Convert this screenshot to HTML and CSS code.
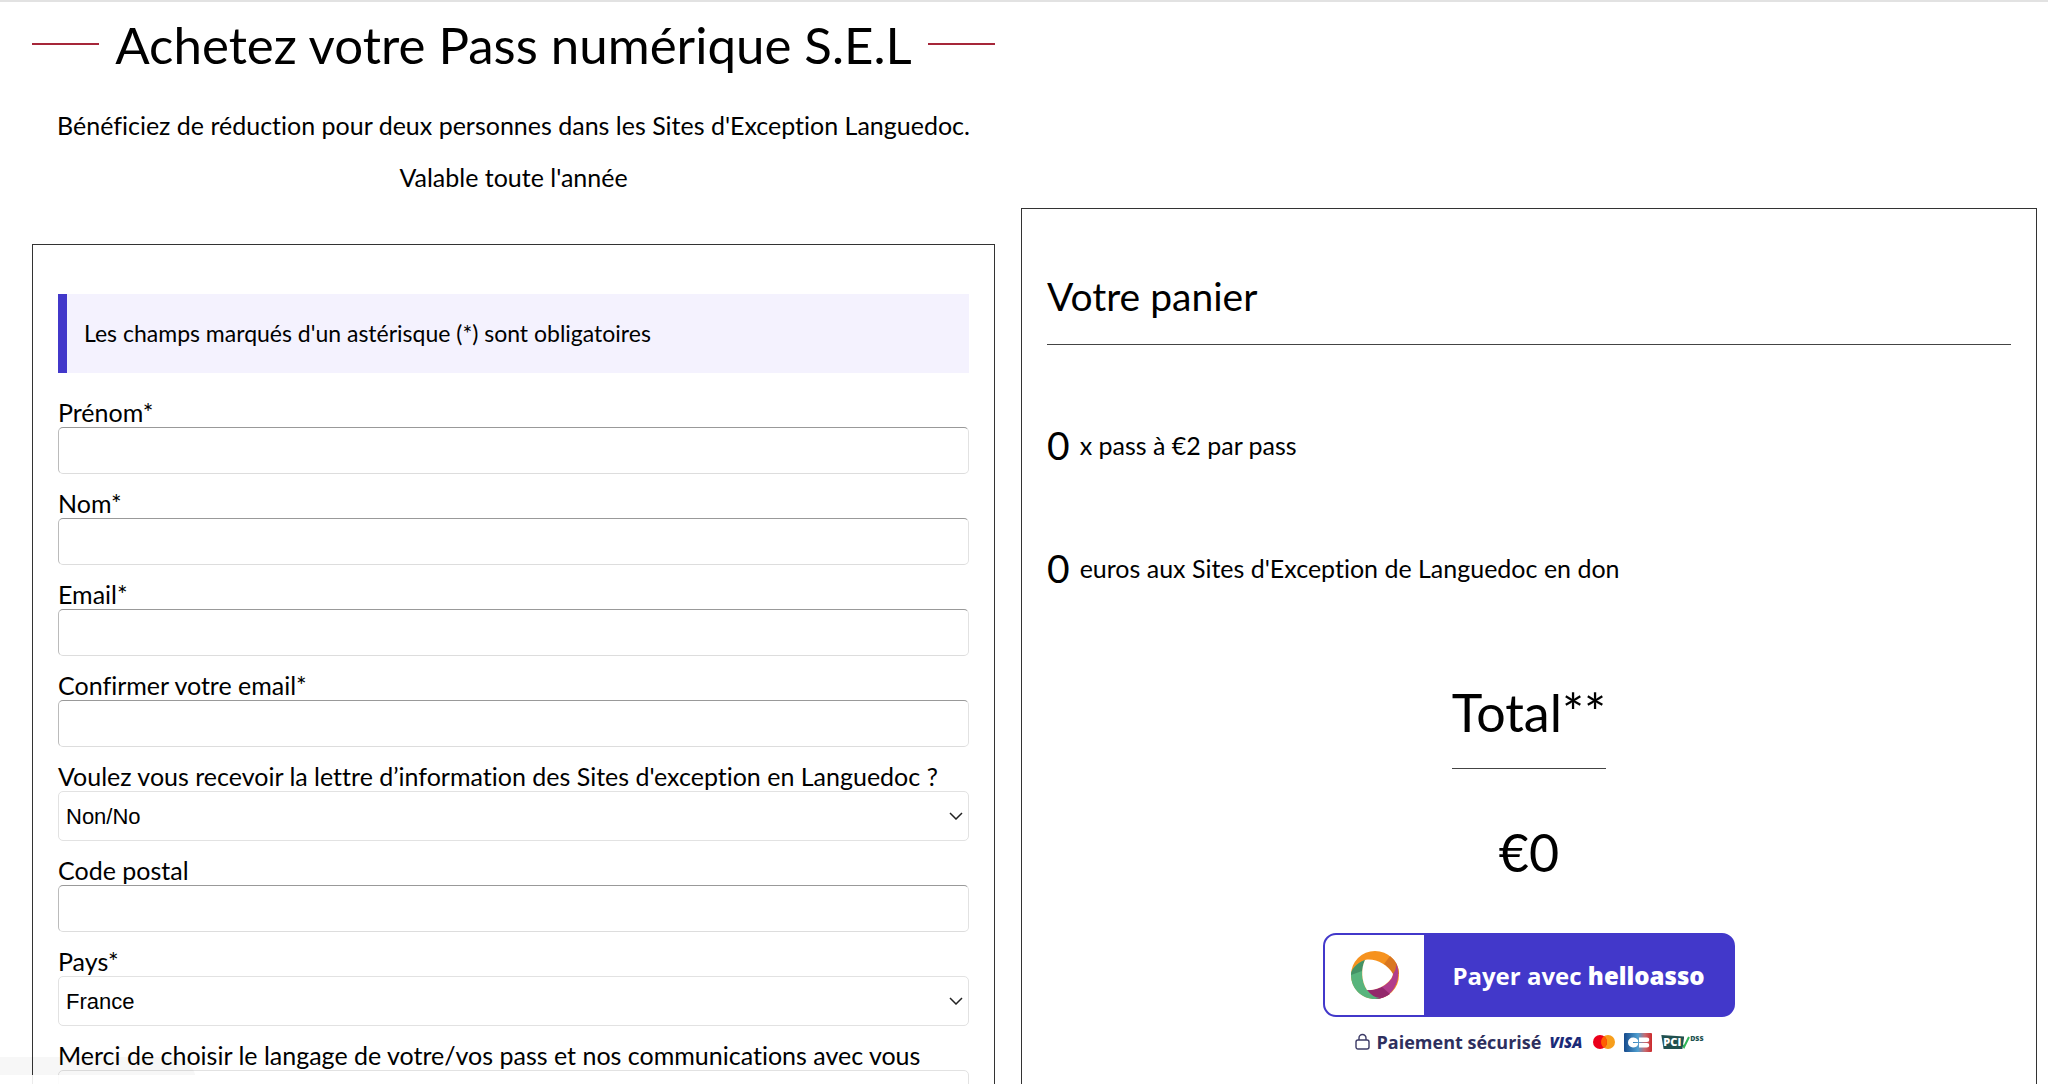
FILE: index.html
```html
<!DOCTYPE html>
<html lang="fr">
<head>
    <meta charset="UTF-8">
    <meta name="viewport" content="width=device-width, initial-scale=1.0">
    <title>Achetez votre Pass numérique S.E.L</title>
    <link rel="stylesheet" href="styles.css">
</head>
<body>
    <main class="page">
        <section class="order">
            <h1 class="title">Achetez votre Pass numérique S.E.L</h1>
            <p class="intro">Bénéficiez de réduction pour deux personnes dans les Sites d'Exception Languedoc.</p>
            <p class="intro">Valable toute l'année</p>

            <form class="card" id="passForm">
                <p class="notice">Les champs marqués d'un astérisque (*) sont obligatoires</p>

                <label for="firstname">Prénom*</label>
                <input type="text" id="firstname" name="firstname">

                <label for="lastname">Nom*</label>
                <input type="text" id="lastname" name="lastname">

                <label for="email">Email*</label>
                <input type="email" id="email" name="email">

                <label for="email2">Confirmer votre email*</label>
                <input type="email" id="email2" name="email2">

                <label for="newsletter">Voulez vous recevoir la lettre d’information des Sites d'exception en Languedoc ?</label>
                <select id="newsletter" name="newsletter">
                    <option>Non/No</option>
                    <option>Oui/Yes</option>
                </select>

                <label for="zip">Code postal</label>
                <input type="text" id="zip" name="zip">

                <label for="country">Pays*</label>
                <select id="country" name="country">
                    <option>France</option>
                </select>

                <label for="language">Merci de choisir le langage de votre/vos pass et nos communications avec vous</label>
                <select id="language" name="language">
                    <option></option>
                    <option>Français</option>
                    <option>English</option>
                </select>
            </form>
        </section>

        <aside class="cart">
            <h2>Votre panier</h2>
            <p class="cart-line"><span class="count">0</span> x pass à €2 par pass</p>
            <p class="cart-line"><span class="count">0</span> euros aux Sites d'Exception de Languedoc en don</p>

            <div class="total">
                <h3>Total**</h3>
                <p class="amount">€0</p>
            </div>

            <div class="pay">
                <button type="submit" form="passForm" class="pay-button">
                    <span class="pay-logo">
                        <svg width="50" height="50" viewBox="0 0 50 50" aria-hidden="true">
                            <circle cx="25" cy="25" r="24" fill="#f6921e"/>
                            <path d="M34 14L40 6Q49 13 49 24L43 24Q40 18 34 14z" fill="#d9761f"/>
                            <path d="M43 24Q47 19 46 13C53 29 43 49 25 49L17 40C28 41 42 33 43 24z" fill="#b13d8a"/>
                            <path d="M17 40Q25 41 32 37L40 44Q33 49 25 49z" fill="#93286b"/>
                            <path d="M15 10C7 13 1 19 1 25C1 39 12 49 25 49L30 48Q22 47 17 40C11 31 11 18 15 10z" fill="#58b47c"/>
                            <path d="M15 10C7 13 1 19 1 25L12 21Q13 14 15 10z" fill="#449265"/>
                            <path d="M15 10C25 8 37 14 43 24C41 33 28 41 17 40C11 31 11 18 15 10z" fill="#fff"/>
                        </svg>
                    </span>
                    <span class="pay-text">Payer avec <strong>helloasso</strong></span>
                </button>
                <div class="secure">
                    <svg width="16" height="18" viewBox="0 0 16 18" fill="none" stroke="#3c3b66" stroke-width="1.400" aria-hidden="true">
                        <rect x="1" y="7" width="13" height="9" rx="2"/>
                        <path d="M4 7V5a3.500 3.500 0 0 1 7 0v2"/>
                    </svg>
                    <span class="secure-text">Paiement sécurisé</span>
                    <span class="visa">VISA</span>
                    <svg class="mastercard" width="22" height="14" viewBox="0 0 22 14" role="img" aria-label="Mastercard">
                        <circle cx="15" cy="7" r="7" fill="#f79e1b"/>
                        <circle cx="7" cy="7" r="7" fill="#eb001b"/>
                        <path d="M11 1.300a7 7 0 0 1 0 11.400a7 7 0 0 1 0-11.400z" fill="#ff5f00"/>
                    </svg>
                    <svg class="cb" width="28" height="19" viewBox="0 0 28 19" role="img" aria-label="CB">
                        <defs>
                            <linearGradient id="cbFill" x1="0" y1="0" x2="1" y2="0">
                                <stop offset="0" stop-color="#164a8c"/>
                                <stop offset=".5" stop-color="#4f9fd0"/>
                                <stop offset=".75" stop-color="#c86a70"/>
                                <stop offset="1" stop-color="#cc2a2c"/>
                            </linearGradient>
                        </defs>
                        <rect width="28" height="19" rx="1" fill="url(#cbFill)"/>
                        <path d="M14 9V7Q12 4 9 4.500a5 5 0 0 0 0 10q4 0 5-3v-1.500H9V9zM15 4.500h8a2 2 0 0 1 0 4.500h-8zM15 10h8a2 2 0 0 1 0 4.500h-8z" fill="#fff"/>
                    </svg>
                    <span class="pci">
                        <span class="pci-mark">PCI</span>
                        <svg class="pci-check" width="10" height="14" viewBox="0 0 10 14" fill="none" stroke="#2fb457" stroke-width="2" aria-hidden="true">
                            <path d="M1 8l3 4L9 2"/>
                        </svg>
                        <span class="dss">DSS</span>
                    </span>
                </div>
            </div>
        </aside>
    </main>
    <div class="status" aria-hidden="true"></div>
</body>
</html>
```

FILE: styles.css
```css
* {
    box-sizing: border-box;
}
body {
    margin: 0;
    border-top: 2px solid #e2e2e2;
    background-color: #fff;
    color: #000;
    font-family: Lato, "Liberation Sans", sans-serif;
    font-size: 25px;
    font-variant-ligatures: none;
    line-height: 34px;
}
h1, h2, h3, p {
    margin: 0;
    font-weight: normal;
}
.page {
    display: grid;
    grid-template-columns: 963fr 1016fr;
    gap: 26px;
    padding: 0 11px 0 32px;
    height: calc(100vh - 2px);
    overflow: hidden;
}

/* Left column */
.title {
    display: flex;
    align-items: center;
    justify-content: space-between;
    gap: 16px;
    margin: 12px 0 32px;
    font-size: 51px;
    line-height: 62px;
    white-space: nowrap;
}
.title::before,
.title::after {
    content: "";
    flex: 1;
    height: 2px;
    margin-bottom: 2px;
    background-color: #a62639;
}
.intro {
    margin-bottom: 18px;
    text-align: center;
}
.card {
    display: flex;
    flex-direction: column;
    margin-top: 50px;
    padding: 49px 25px;
    border: 1px solid #333;
}
.notice {
    margin-bottom: 24px;
    padding: 22px 17px 23px;
    border-left: 9px solid #4238ca;
    background-color: #f4f2fe;
    font-size: 23px;
}
label {
    line-height: 30px;
}
input, select {
    width: 100%;
    margin-bottom: 14px;
    border: 1px solid #e2e2e2;
    border-radius: 5px;
    background-color: #fff;
    color: #000;
    font-family: "Liberation Sans", Arial, sans-serif;
    font-size: 22px;
}
input {
    height: 47px;
    border-color: #999 #e2e2e2 #ddd #bbb;
}
select {
    height: 50px;
    padding: 0 7px;
    appearance: none;
    background-image: url("data:image/svg+xml,%3Csvg xmlns='http://www.w3.org/2000/svg' width='14' height='8' fill='none' stroke='%23222' stroke-width='1.500'%3E%3Cpath d='M1 1l6 6 6-6'/%3E%3C/svg%3E");
    background-repeat: no-repeat;
    background-position: right 5px center;
}

/* Right column */
.cart {
    margin-top: 206px;
    padding: 63px 25px 0;
    border: 1px solid #333;
    border-bottom: 0;
}
.cart h2 {
    margin-bottom: 76px;
    padding-bottom: 24px;
    border-bottom: 1px solid #444;
    font-size: 39px;
    line-height: 48px;
}
.cart-line {
    display: flex;
    align-items: center;
    gap: 10px;
    margin-bottom: 75px;
    line-height: 48px;
}
.count {
    font-size: 39px;
}
.total {
    display: flex;
    flex-direction: column;
    align-items: center;
    margin-bottom: 50px;
    font-size: 52px;
    line-height: 62px;
}
.total h3 {
    margin: 14px 0 52px;
    padding-bottom: 25px;
    border-bottom: 1px solid #444;
    font-size: 52px;
}
.pay {
    display: flex;
    flex-direction: column;
    align-items: center;
    gap: 15px;
    font-family: "Open Sans", "Noto Sans", sans-serif;
}
.pay-button {
    display: flex;
    width: 412px;
    height: 84px;
    padding: 0;
    overflow: hidden;
    border: 2px solid #4238ca;
    border-radius: 13px;
    background-color: #4238ca;
    color: #fff;
    font-family: inherit;
    font-size: 24px;
    font-weight: 700;
    cursor: pointer;
}
.pay-logo {
    display: flex;
    align-items: center;
    justify-content: center;
    width: 99px;
    height: 100%;
    background-color: #fff;
}
.pay-text {
    flex: 1;
    align-self: center;
}
.pay-text strong {
    font-weight: 800;
}
.secure {
    display: flex;
    align-items: center;
    color: #2e2f5e;
    line-height: 20px;
}
.secure-text {
    margin: 0 8px 0 6px;
    font-size: 18px;
    font-weight: 700;
}
.visa {
    color: #1a2a78;
    font-size: 15px;
    font-style: italic;
    font-weight: 800;
}
.mastercard {
    margin: 0 9px 0 11px;
}
.pci {
    display: flex;
    align-items: center;
    margin-left: 9px;
}
.pci-mark {
    padding: 0 3px 0 2px;
    background-color: #20504f;
    color: #fff;
    font-size: 11px;
    font-weight: 800;
    line-height: 14px;
    clip-path: polygon(0 0, 100% 10%, 92% 100%, 10% 100%);
}
.pci-check {
    margin-left: -4px;
}
.dss {
    margin-bottom: 6px;
    color: #20504f;
    font-size: 7px;
    font-weight: 800;
    line-height: 8px;
}

/* Faint bubble in the bottom left corner */
.status {
    position: fixed;
    left: 0;
    bottom: 0;
    width: 196px;
    height: 27px;
    border-radius: 0 24px 0 0;
    background: linear-gradient(to bottom, rgba(0, 0, 0, 0.03) 18px, rgba(255, 255, 255, 0.9) 18px);
    pointer-events: none;
}
```
